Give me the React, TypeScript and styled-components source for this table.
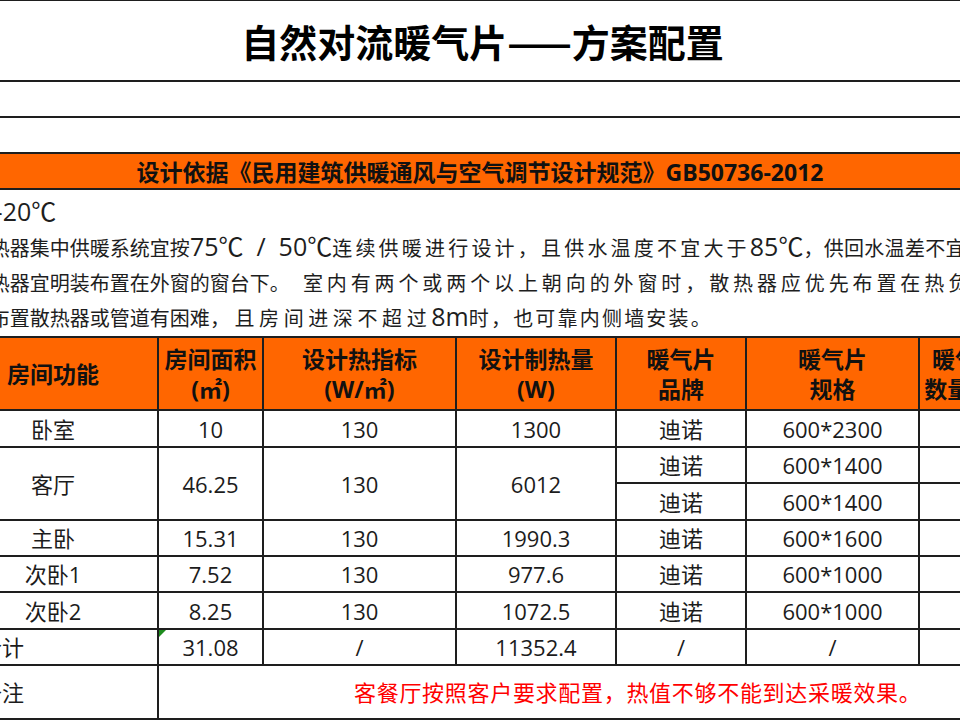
import React from "react";
import styled, { createGlobalStyle } from "styled-components";

const Global = createGlobalStyle`
  html, body { margin: 0; padding: 0; background: #ffffff; }
  body { width: 960px; height: 720px; overflow: hidden; }
  * { box-sizing: border-box; }
`;

const MIX = `"Open Sans", "Noto Sans CJK SC", sans-serif`;
const CJK = `"Noto Sans CJK SC", sans-serif`;
const LINE = "#1e1e1e";
const ORANGE = "#ff6600";

const Page = styled.div`
  width: 960px;
  height: 720px;
  overflow: hidden;
`;

const Sheet = styled.div`
  width: 1066px;
  margin-left: -53px;
  font-family: ${MIX};
  color: #1c1c1c;
`;

const TitleRow = styled.div`
  height: 82px;
  border-top: 1px solid ${LINE};
  border-bottom: 2px solid ${LINE};
  display: flex;
  align-items: center;
  justify-content: center;
  padding-left: 5px;
  font-family: ${CJK};
  font-weight: 700;
  font-size: 38px;
  color: #000;
`;

const BlankRow = styled.div<{ $h: number }>`
  height: ${(p) => p.$h}px;
  border-bottom: 2px solid ${LINE};
`;

const Banner = styled.div`
  height: 36px;
  background: ${ORANGE};
  border-bottom: 2px solid ${LINE};
  display: flex;
  align-items: center;
  justify-content: center;
  font-family: ${MIX};
  font-weight: 700;
  font-size: 23px;
  color: #111;
`;

const Notes = styled.div`
  padding-top: 5px;
  height: 146px;
`;

const NoteLine = styled.div<{ $indent: number }>`
  height: 35px;
  padding-left: ${(p) => p.$indent}px;
  white-space: nowrap;
  font-family: ${CJK};
  font-size: 20px;
  line-height: 35px;
  color: #1e1e1e;
`;

const Lat = styled.span`
  font-family: "Open Sans", "Noto Sans CJK SC", sans-serif;
  font-size: 25px;
  line-height: 1;
`;

const Sp = styled.span<{ $ls: number }>`
  letter-spacing: ${(p) => p.$ls}px;
`;

const Grid = styled.table`
  width: 1066px;
  table-layout: fixed;
  border-collapse: collapse;
  font-family: ${MIX};
`;

const Row = styled.tr<{ $h: number }>`
  height: ${(p) => p.$h}px;
`;

const HeadCell = styled.th`
  background: ${ORANGE};
  border: 2px solid ${LINE};
  font-weight: 700;
  font-size: 23px;
  line-height: 30px;
  color: #111;
  text-align: center;
  vertical-align: middle;
  padding: 0;
  white-space: nowrap;
  overflow: hidden;
`;

const Cell = styled.td<{ $flag?: boolean }>`
  position: relative;
  border: 2px solid ${LINE};
  font-size: 22px;
  line-height: 30px;
  color: #1c1c1c;
  text-align: center;
  vertical-align: middle;
  padding: 0;
  white-space: nowrap;
  &::before {
    content: "";
    display: ${(p) => (p.$flag ? "block" : "none")};
    position: absolute;
    left: 0;
    top: 0;
    width: 0;
    height: 0;
    border-top: 7px solid #1e8c1e;
    border-right: 7px solid transparent;
  }
`;

const LabelCell = styled(Cell)`
  text-align: left;
  padding-left: 31px;
`;

const NoteCell = styled(Cell)`
  text-align: left;
  padding-left: 195px;
  letter-spacing: 0.7px;
  color: #ff0000;
`;

type R = {
  room: string;
  area: string;
  heat: string;
  spec: string;
  h: number;
};

const rows: R[] = [
  { room: "主卧", area: "15.31", heat: "1990.3", spec: "600*1600", h: 36 },
  { room: "次卧1", area: "7.52", heat: "977.6", spec: "600*1000", h: 36 },
  { room: "次卧2", area: "8.25", heat: "1072.5", spec: "600*1000", h: 37 },
];

const headers: string[][] = [
  ["房间功能"],
  ["房间面积", "(㎡)"],
  ["设计热指标", "(W/㎡)"],
  ["设计制热量", "(W)"],
  ["暖气片", "品牌"],
  ["暖气片", "规格"],
  ["暖气片", "数量(组)"],
];

const widths = [210, 105, 193, 160, 130, 173, 95];

export default function App() {
  return (
    <Page>
      <Global />
      <Sheet>
        <TitleRow>自然对流暖气片——方案配置</TitleRow>
        <BlankRow $h={36} />
        <BlankRow $h={36} />
        <Banner>设计依据《民用建筑供暖通风与空气调节设计规范》GB50736-2012</Banner>
        <Notes>
          <NoteLine $indent={19}>
            <Lat>18-20℃</Lat>
          </NoteLine>
          <NoteLine $indent={2}>
            <Lat>1.</Lat>散热器集中供暖系统宜按<Lat>75℃&nbsp;&nbsp;/&nbsp;&nbsp;50℃</Lat>
            <Sp $ls={3.2}>连续供暖进行设计，且供水温度不宜大于</Sp>
            <Lat>85℃</Lat>
            <Sp $ls={0.3}>，供回水温差不宜小于</Sp>
            <Lat>20℃</Lat>。
          </NoteLine>
          <NoteLine $indent={2}>
            <Lat>2.</Lat>散热器宜明装布置在外窗的窗台下。<Lat>&nbsp;&nbsp;</Lat>
            <Sp $ls={3.9}>室内有两个或两个以上朝向的外窗时，散热器应优先布置在热负荷较大的外窗下。</Sp>
          </NoteLine>
          <NoteLine $indent={2}>
            <Lat>3.</Lat>当布置散热器或管道有困难
            <Sp $ls={4.6}>，且房间进深不超过</Sp>
            <Lat>8m</Lat>
            <Sp $ls={2.2}>时，也可靠内侧墙安装。</Sp>
          </NoteLine>
        </Notes>
        <Grid>
          <colgroup>
            {widths.map((w, i) => (
              <col key={i} style={{ width: w }} />
            ))}
          </colgroup>
          <tbody>
            <Row $h={73}>
              {headers.map((lines, i) => (
                <HeadCell key={i}>
                  {lines.map((t, j) => (
                    <React.Fragment key={j}>
                      {j > 0 && <br />}
                      {t}
                    </React.Fragment>
                  ))}
                </HeadCell>
              ))}
            </Row>
            <Row $h={37}>
              <Cell>卧室</Cell>
              <Cell>10</Cell>
              <Cell>130</Cell>
              <Cell>1300</Cell>
              <Cell>迪诺</Cell>
              <Cell>600*2300</Cell>
              <Cell />
            </Row>
            <Row $h={36}>
              <Cell rowSpan={2}>客厅</Cell>
              <Cell rowSpan={2}>46.25</Cell>
              <Cell rowSpan={2}>130</Cell>
              <Cell rowSpan={2}>6012</Cell>
              <Cell>迪诺</Cell>
              <Cell>600*1400</Cell>
              <Cell />
            </Row>
            <Row $h={37}>
              <Cell>迪诺</Cell>
              <Cell>600*1400</Cell>
              <Cell />
            </Row>
            {rows.map((r) => (
              <Row $h={r.h} key={r.room}>
                <Cell>{r.room}</Cell>
                <Cell>{r.area}</Cell>
                <Cell>130</Cell>
                <Cell>{r.heat}</Cell>
                <Cell>迪诺</Cell>
                <Cell>{r.spec}</Cell>
                <Cell />
              </Row>
            ))}
            <Row $h={36}>
              <LabelCell>合计</LabelCell>
              <Cell $flag>31.08</Cell>
              <Cell>/</Cell>
              <Cell>11352.4</Cell>
              <Cell>/</Cell>
              <Cell>/</Cell>
              <Cell />
            </Row>
            <Row $h={54}>
              <LabelCell>备注</LabelCell>
              <NoteCell colSpan={6}>客餐厅按照客户要求配置，热值不够不能到达采暖效果。</NoteCell>
            </Row>
          </tbody>
        </Grid>
      </Sheet>
    </Page>
  );
}
